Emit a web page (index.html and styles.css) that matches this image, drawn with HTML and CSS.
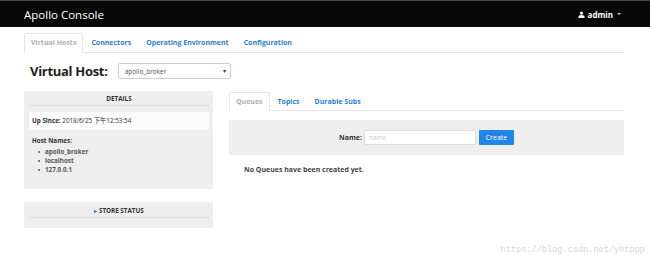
FILE: index.html
```html
<!DOCTYPE html>
<html>
<head>
<meta charset="utf-8">
<link rel="stylesheet" href="styles.css">
</head>
<body>
<header class="navbar">
  <span class="brand">Apollo Console</span>
  <span class="user">
    <svg class="user-icon" viewBox="0 0 10 10" width="7" height="7"><circle cx="5" cy="3" r="2.4" fill="#fff"/><path d="M0.5 10 C0.5 6.5 2 5.6 5 5.6 C8 5.6 9.5 6.5 9.5 10 Z" fill="#fff"/></svg>
    admin<span class="caret"></span>
  </span>
</header>
<main class="container">
  <nav class="tabs top-tabs">
    <span class="tab active">Virtual Hosts</span>
    <span class="tab">Connectors</span>
    <span class="tab">Operating Environment</span>
    <span class="tab">Configuration</span>
  </nav>
  <div class="vh-row">
    <h1 class="vh-title">Virtual Host:</h1>
    <div class="select"><span>apollo_broker</span><span class="sel-caret">▾</span></div>
  </div>
  <div class="columns">
    <aside class="side">
      <section class="panel details">
        <div class="panel-head">DETAILS</div>
        <div class="upsince"><b>Up Since:</b> 2018/6/25 下午12:53:54</div>
        <div class="hosts">
          <b>Host Names:</b>
          <ul>
            <li>apollo_broker</li>
            <li>localhost</li>
            <li>127.0.0.1</li>
          </ul>
        </div>
      </section>
      <section class="panel store">
        <div class="panel-head"><span class="tri">▸</span> STORE STATUS</div>
      </section>
    </aside>
    <section class="content">
      <nav class="tabs sub-tabs">
        <span class="tab active">Queues</span>
        <span class="tab">Topics</span>
        <span class="tab">Durable Subs</span>
      </nav>
      <div class="create-box">
        <label class="name-label">Name:</label>
        <span class="input">name</span>
        <span class="btn">Create</span>
      </div>
      <p class="empty">No Queues have been created yet.</p>
    </section>
  </div>
</main>
<div class="watermark">https://blog.csdn.net/yhtppp</div>
</body>
</html>
```
FILE: styles.css
```css
* { box-sizing: border-box; }
html, body { margin: 0; padding: 0; }
body {
  width: 650px;
  height: 261px;
  background: #fff;
  font-family: "Open Sans", "Noto Sans CJK SC", sans-serif;
  color: #333;
  position: relative;
  overflow: hidden;
}
.navbar {
  height: 27px;
  background: #080808;
  border-top: 1px solid #4a4a4a;
  display: flex;
  align-items: center;
  justify-content: space-between;
  padding: 0 25px 0 24px;
}
.brand { color: #fff; font-size: 11.5px; }
.user {
  color: #fff;
  font-size: 8px;
  font-weight: 700;
  display: flex;
  align-items: center;
  gap: 3px;
  padding-right: 4px;
}
.caret {
  display: inline-block;
  width: 0; height: 0;
  border-left: 2px solid transparent;
  border-right: 2px solid transparent;
  border-top: 2px solid #ccc;
  margin-left: 1px;
}
.container { padding: 6px 26px 0 24px; }
.tabs {
  display: flex;
  border-bottom: 1px solid #e5e5e5;
  height: 20px;
}
.tab {
  font-size: 7px;
  font-weight: 700;
  color: #2a7fd4;
  padding: 0 6px;
  line-height: 18px;
  border: 1px solid transparent;
  border-bottom: none;
  margin-right: 1px;
}
.tab.active {
  color: #b0b0b0;
  border-color: #e5e5e5;
  background: #fff;
  height: 20px;
  border-radius: 2px 2px 0 0;
  margin-bottom: -1px;
}
.vh-row {
  display: flex;
  align-items: center;
  height: 16px;
  margin-top: 10px;
  padding-left: 6px;
}
.vh-title {
  font-size: 13px;
  font-weight: 700;
  margin: 0 10px 0 0;
  color: #222;
  letter-spacing: -0.3px;
}
.select {
  width: 113px;
  height: 16px;
  border: 1px solid #ccc;
  border-radius: 2px;
  display: flex;
  align-items: center;
  justify-content: space-between;
  padding: 0 4px 0 6px;
  font-size: 6.5px;
  color: #555;
}
.sel-caret { font-size: 6px; color: #333; }
.columns {
  display: flex;
  gap: 16px;
  margin-top: 12px;
}
.side { width: 189px; display: flex; flex-direction: column; gap: 13px; }
.panel {
  background: #eee;
  padding: 0 4px 0 5px;
}
.panel-head {
  font-size: 6.3px;
  font-weight: 700;
  text-align: center;
  color: #333;
  height: 15px;
  line-height: 16px;
  border-bottom: 1px solid #ddd;
}
.details { height: 98px; }
.upsince {
  background: #fbfbfb;
  margin-top: 6px;
  height: 18px;
  line-height: 18px;
  padding-left: 3px;
  font-size: 6.3px;
  color: #333;
}
.hosts {
  font-size: 6.3px;
  line-height: 9px;
  padding: 6px 3px 0;
  color: #333;
}
.hosts ul {
  margin: 2px 0 0;
  padding: 0 0 0 6px;
  list-style: none;
}
.hosts li {
  font-weight: 700;
  color: #555;
  line-height: 9px;
}
.hosts li::before {
  content: "";
  display: inline-block;
  width: 2px;
  height: 2px;
  border-radius: 50%;
  background: #555;
  vertical-align: middle;
  margin-right: 5px;
}
.store { height: 26px; }
.store .panel-head { height: 16px; line-height: 17px; }
.tri { color: #2a7fd4; font-size: 6px; }
.content { width: 395px; margin-top: 1px; }
.sub-tabs { height: 19px; }
.sub-tabs .tab { line-height: 17px; }
.sub-tabs .tab.active { height: 19px; }
.create-box {
  margin-top: 9px;
  background: #eee;
  height: 35px;
  display: flex;
  align-items: center;
  justify-content: center;
}
.name-label { font-size: 7px; font-weight: 700; color: #333; margin-right: 2px; }
.input {
  width: 112px;
  height: 15px;
  background: #fff;
  border: 1px solid #ddd;
  font-size: 6.5px;
  color: #ccc;
  line-height: 13px;
  padding-left: 4px;
}
.btn {
  margin-left: 3px;
  width: 35px;
  height: 15px;
  background: #1f86e8;
  color: #fff;
  font-size: 7px;
  line-height: 15px;
  text-align: center;
  border-radius: 1px;
}
.empty {
  margin: 10px 0 0 15px;
  font-size: 7px;
  font-weight: 700;
  color: #444;
}
.watermark {
  position: absolute;
  right: 5px;
  bottom: 6px;
  font-family: "Liberation Mono", monospace;
  font-size: 8.6px;
  color: #d6d6d6;
}
```
